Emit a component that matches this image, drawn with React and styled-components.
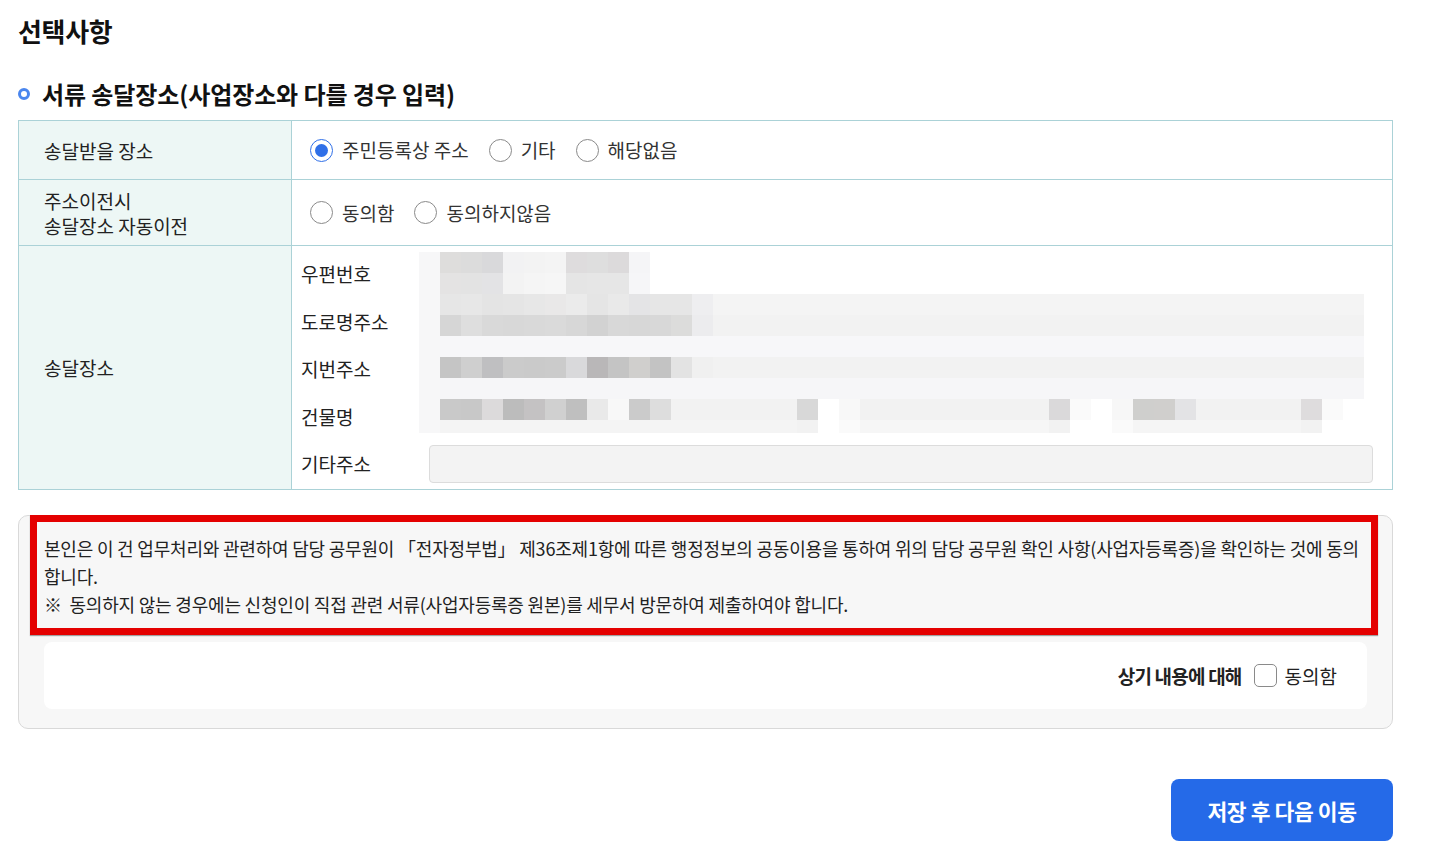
import React from "react";
import styled, { createGlobalStyle } from "styled-components";

const GlobalStyle = createGlobalStyle`
  html, body { margin: 0; padding: 0; background: #ffffff; }
  body {
    font-family: "Noto Sans CJK KR", "Noto Sans", sans-serif;
    color: #222222;
    -webkit-font-smoothing: antialiased;
  }
  * { box-sizing: border-box; }
`;

const Page = styled.div`
  width: 1375px;
  margin-left: 18px;
  padding-top: 12px;
  padding-bottom: 21px;
  display: flex;
  flex-direction: column;
`;

const PageTitle = styled.h2`
  margin: 0;
  font-size: 26px;
  line-height: 38px;
  font-weight: 700;
  letter-spacing: -0.3px;
  color: #111;
`;

const SectionTitle = styled.h3`
  margin: 27px 0 0;
  display: flex;
  align-items: center;
  gap: 12px;
  font-size: 24px;
  line-height: 34px;
  font-weight: 700;
  color: #111;
  letter-spacing: -0.1px;
`;

const Dot = styled.span`
  width: 12px;
  height: 12px;
  border-radius: 50%;
  border: 3px solid #4a86ee;
  flex: none;
`;

const Table = styled.div`
  margin-top: 9px;
  display: grid;
  grid-template-columns: 273px 1fr;
  border: 1px solid #abd2d7;
  border-bottom: none;
`;

const HeadCell = styled.div`
  background: #edf7f5;
  border-right: 1px solid #abd2d7;
  border-bottom: 1px solid #abd2d7;
  display: flex;
  align-items: center;
  padding-left: 25px;
  font-size: 19px;
  line-height: 25px;
  color: #222;
  height: ${(p) => p.$h}px;
`;

const ValueCell = styled.div`
  border-bottom: 1px solid #abd2d7;
  display: flex;
  align-items: center;
  padding-left: 18px;
  height: ${(p) => p.$h}px;
`;

const RadioGroup = styled.div`
  display: flex;
  align-items: center;
  gap: 20px;
`;

const RadioLabel = styled.label`
  display: flex;
  align-items: center;
  gap: 9px;
  font-size: 19px;
  color: #333;
  line-height: 24px;
`;

const RadioCircle = styled.span`
  width: 23px;
  height: 23px;
  border-radius: 50%;
  border: 1.5px solid ${(p) => (p.$on ? "#2f6fe8" : "#8a8a8a")};
  display: flex;
  align-items: center;
  justify-content: center;
  background: #fff;
  &::after {
    content: "";
    width: 13px;
    height: 13px;
    border-radius: 50%;
    background: ${(p) => (p.$on ? "#2f6fe8" : "transparent")};
  }
`;

const AddressGrid = styled.div`
  display: grid;
  grid-template-columns: 118px 1fr;
  grid-template-rows: repeat(5, 47.5px);
  padding: 4px 0 0 9px;
  height: 244px;
  border-bottom: 1px solid #abd2d7;
  width: 100%;
`;

const AddrLabel = styled.div`
  display: flex;
  align-items: center;
  font-size: 19px;
  color: #222;
  grid-column: 1;
  grid-row: ${(p) => p.$row};
`;

const MosaicWrap = styled.div`
  grid-column: 2;
  grid-row: 1 / span 4;
  padding-top: 2px;
`;

const TextInput = styled.div`
  grid-column: 2;
  grid-row: 5;
  align-self: center;
  margin: 0 19px 0 10px;
  height: 38px;
  background: #f3f3f3;
  border: 1px solid #dcdcdc;
  border-radius: 4px;
`;

const ConsentBox = styled.div`
  margin-top: 25px;
  border: 1px solid #d9d9d9;
  border-radius: 10px;
  background: #f7f7f7;
  padding-bottom: 19px;
  display: flex;
  flex-direction: column;
`;

const Notice = styled.div`
  margin: -1px 14px 0 11px;
  border: 7px solid #e40000;
  background: #f7f7f7;
  padding: 12px 6px 10px 7px;
  box-shadow: 0 1px 1px rgba(0, 0, 0, 0.35);
  font-size: 18px;
  line-height: 28px;
  letter-spacing: -0.2px;
  color: #222;
`;

const AgreePanel = styled.div`
  margin: 7px 25px 0;
  height: 67px;
  background: #fff;
  border-radius: 8px;
  display: flex;
  align-items: center;
  justify-content: flex-end;
  padding-right: 30px;
  gap: 8px;
  font-size: 19px;
  color: #222;
`;

const AgreeLead = styled.span`
  font-weight: 700;
  letter-spacing: -0.8px;
  margin-right: 4px;
`;

const CheckBox = styled.span`
  width: 23px;
  height: 23px;
  border: 1.5px solid #8a8a8a;
  border-radius: 5px;
  background: #fff;
`;

const Footer = styled.div`
  margin-top: 50px;
  display: flex;
  justify-content: flex-end;
`;

const PrimaryButton = styled.button`
  width: 222px;
  height: 62px;
  border: none;
  border-radius: 8px;
  background: #256ae8;
  color: #fff;
  font-family: inherit;
  font-size: 21.5px;
  font-weight: 700;
  letter-spacing: -0.4px;
`;

const W = "#ffffff";
const fill = (n, c) => Array(n).fill(c);
const mosaicRows = [
  ["#f7f7f8", "#dedddc", "#dcdcdc", "#d9d9db", "#f2f2f3", "#f3f3f3", "#f4f4f4", "#dedcdd", "#dedede", "#dcdadb", "#f5f5f7", ...fill(34, W)],
  ["#f7f7f8", "#e4e3e3", "#e3e3e3", "#e3e3e5", "#f3f3f3", "#f5f5f5", "#f6f6f6", "#e5e5e5", "#e6e6e6", "#e6e6e6", "#f6f6f8", ...fill(34, W)],
  ["#f7f7f8", "#e6e6e6", "#e7e7e7", "#e4e4e4", "#e5e5e5", "#e7e7e7", "#e9e8e8", "#ebebeb", "#e5e5e5", "#e9e9e9", "#e4e4e6", "#e6e6e6", "#e6e6e6", "#eeeef0", ...fill(31, "#f4f4f4")],
  ["#f7f7f8", "#d6d6d6", "#dedede", "#d9d9d9", "#d8d8d8", "#d9d9d9", "#dadada", "#d7d7d7", "#d2d2d2", "#d8d8d8", "#d7d7d7", "#d8d8d8", "#dcdcdb", "#ececee", ...fill(31, "#f2f2f2")],
  ["#f7f7f8", ...fill(44, "#f7f7f9")],
  ["#f7f7f8", "#c5c5c5", "#cfcfcf", "#bfbfc1", "#cbcbcb", "#cacaca", "#cbcbcb", "#d9d9db", "#b9b7b8", "#c4c4c4", "#d0cfcd", "#c3c3c3", "#e3e3e3", "#f0f0f0", ...fill(31, "#f2f2f2")],
  ["#f7f7f8", ...fill(44, "#f6f6f8")],
  ["#f7f7f8", "#c9c9c9", "#c8c8c8", "#dcdadb", "#bcbcbc", "#c4c2c3", "#d0d0d0", "#bfbfbf", "#e9e9e9", "#f8f8f8", "#cbcbcb", "#dddddd", ...fill(6, "#f2f2f2"), "#d8d8d8", W, "#f8f8f8", ...fill(9, "#f2f2f2"), "#dad9da", "#fafafa", W, "#f7f7f7", "#cfcfcd", "#d0cfcd", "#e3e3e5", ...fill(5, "#f2f2f2"), "#dedcdd", "#fafafa", W],
  ["#f7f7f8", ...fill(17, "#f4f4f4"), "#f2f2f2", W, "#fafafa", ...fill(9, "#f6f6f6"), "#f2f2f2", W, W, "#fafafa", ...fill(8, "#f5f5f5"), "#f2f2f2", W, W],
];

function Mosaic() {
  const cell = 21;
  return (
    <svg width="945" height="181" viewBox="0 0 945 181" shapeRendering="crispEdges" style={{ display: "block" }}>
      {mosaicRows.map((row, r) =>
        row.map((c, i) => (
          <rect key={`${r}-${i}`} x={i * cell} y={r * cell} width={cell} height={r === 8 ? 13 : cell} fill={c} />
        ))
      )}
    </svg>
  );
}

function Radio({ on, children }) {
  return (
    <RadioLabel>
      <RadioCircle $on={on} />
      {children}
    </RadioLabel>
  );
}

export default function App() {
  return (
    <>
      <GlobalStyle />
      <Page>
        <PageTitle>선택사항</PageTitle>
        <SectionTitle>
          <Dot />
          서류 송달장소(사업장소와 다를 경우 입력)
        </SectionTitle>
        <Table>
          <HeadCell $h={59}>송달받을 장소</HeadCell>
          <ValueCell $h={59}>
            <RadioGroup>
              <Radio on>주민등록상 주소</Radio>
              <Radio>기타</Radio>
              <Radio>해당없음</Radio>
            </RadioGroup>
          </ValueCell>
          <HeadCell $h={66}>
            주소이전시
            <br />
            송달장소 자동이전
          </HeadCell>
          <ValueCell $h={66}>
            <RadioGroup>
              <Radio>동의함</Radio>
              <Radio>동의하지않음</Radio>
            </RadioGroup>
          </ValueCell>
          <HeadCell $h={244}>송달장소</HeadCell>
          <AddressGrid>
            <AddrLabel $row={1}>우편번호</AddrLabel>
            <AddrLabel $row={2}>도로명주소</AddrLabel>
            <AddrLabel $row={3}>지번주소</AddrLabel>
            <AddrLabel $row={4}>건물명</AddrLabel>
            <AddrLabel $row={5}>기타주소</AddrLabel>
            <MosaicWrap>
              <Mosaic />
            </MosaicWrap>
            <TextInput />
          </AddressGrid>
        </Table>

        <ConsentBox>
          <Notice>
            본인은 이 건 업무처리와 관련하여 담당 공무원이 「전자정부법」 제36조제1항에 따른 행정정보의 공동이용을 통하여 위의 담당 공무원 확인 사항(사업자등록증)을 확인하는 것에 동의합니다.
            <br />
            ※{"\u00a0"} 동의하지 않는 경우에는 신청인이 직접 관련 서류(사업자등록증 원본)를 세무서 방문하여 제출하여야 합니다.
          </Notice>
          <AgreePanel>
            <AgreeLead>상기 내용에 대해</AgreeLead>
            <CheckBox />
            <span>동의함</span>
          </AgreePanel>
        </ConsentBox>

        <Footer>
          <PrimaryButton type="button">저장 후 다음 이동</PrimaryButton>
        </Footer>
      </Page>
    </>
  );
}
